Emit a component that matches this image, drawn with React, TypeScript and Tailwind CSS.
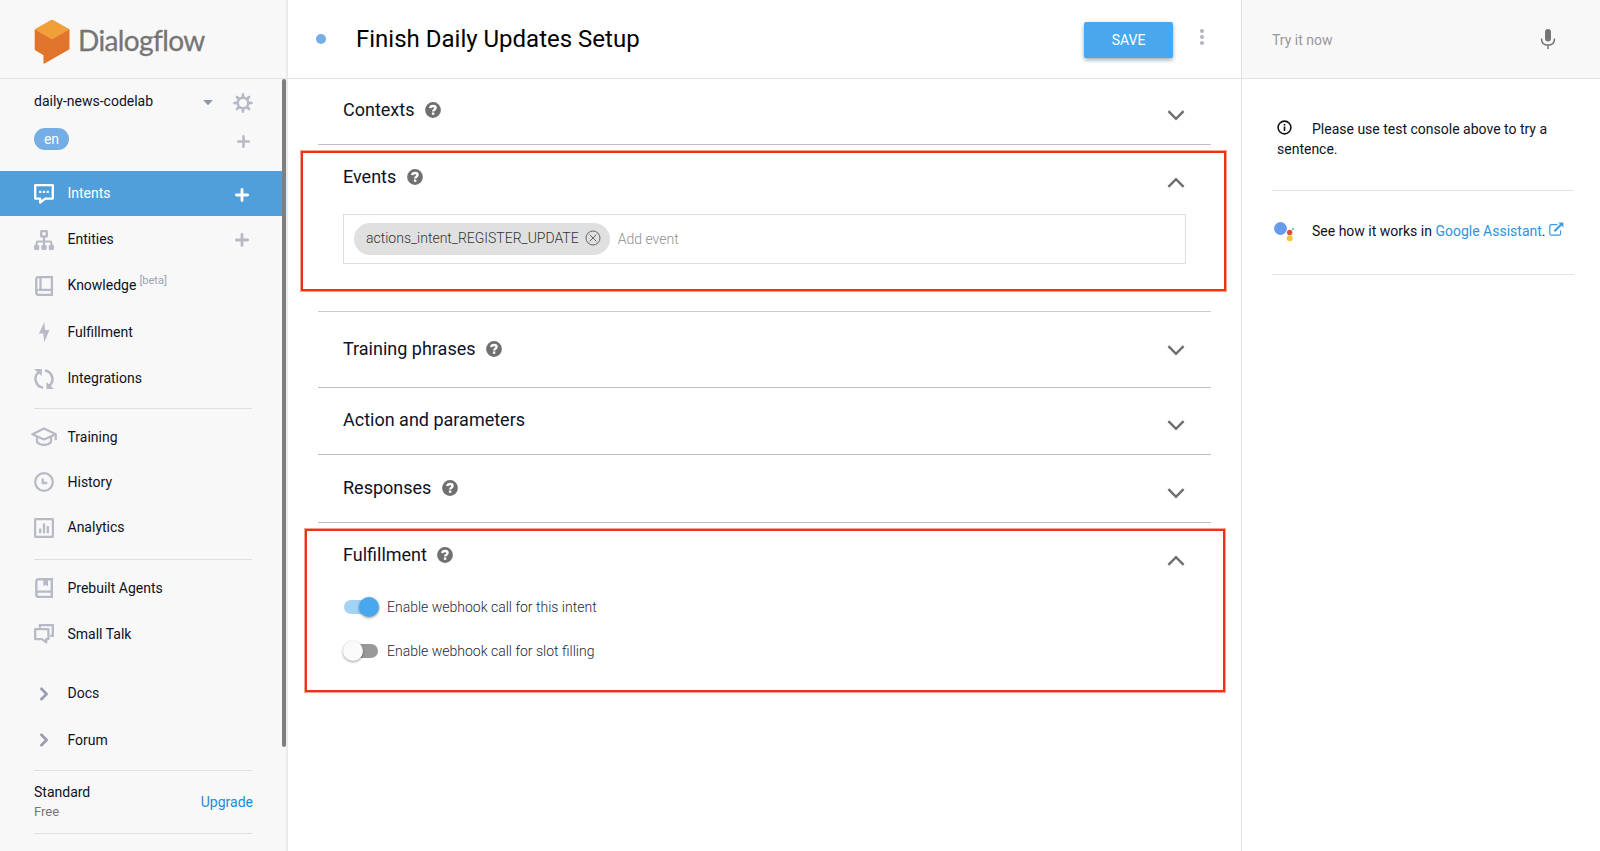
import type { ReactNode } from "react";
import clsx from "clsx";

const ICON = "#b7bac6";

function LogoMark() {
  return (
    <svg width="36" height="46" viewBox="0 0 36 46" className="shrink-0">
      <path d="M18 0.8 35.5 10.6V30.2L10.6 44.6Q9.6 45 9.5 43.8V36.2L1.2 31.2Q.7 30.8.7 30V10.6Z" fill="#e0742d" />
      <path d="M17 1.2Q18 .6 19.1 1.2L35.5 10.6 18 20.6.7 10.6Z" fill="#f19f38" />
    </svg>
  );
}

function Svg({ children, w = 20, h = 20, vb }: { children: ReactNode; w?: number; h?: number; vb?: string }) {
  return (
    <svg width={w} height={h} viewBox={vb ?? `0 0 ${w} ${h}`} fill="none" className="shrink-0">
      {children}
    </svg>
  );
}

const Gear = () => (
  <Svg>
    <circle cx="10" cy="10" r="5.2" stroke={ICON} strokeWidth="2.4" />
    {[0, 45, 90, 135, 180, 225, 270, 315].map((a) => (
      <path key={a} d="M8.9 .4Q10 -.2 11.1 .4L11.7 4.6H8.3Z" fill={ICON} transform={`rotate(${a} 10 10)`} />
    ))}
  </Svg>
);

const Plus = ({ color = ICON, size = 13 }: { color?: string; size?: number }) => (
  <Svg w={size} h={size} vb="0 0 14 14">
    <path d="M7 1.4V12.6M1.4 7H12.6" stroke={color} strokeWidth="2.8" strokeLinecap="round" />
  </Svg>
);

const IntentsIcon = () => (
  <Svg>
    <path d="M1.2 1.2H18.8V14.6H11.2L6.2 18.6V14.6H1.2Z" stroke="#fff" strokeWidth="2.3" strokeLinejoin="round" />
    <path d="M5.2 6.8H7.4V9H5.2ZM8.9 6.8H11.1V9H8.9ZM12.6 6.8H14.8V9H12.6Z" fill="#fff" />
  </Svg>
);

const EntitiesIcon = () => (
  <Svg>
    <rect x="7.2" y="1.1" width="5.6" height="5.4" rx=".6" stroke={ICON} strokeWidth="2.3" />
    <path d="M10 7V16M2.6 16V13Q2.6 11.6 4 11.6H16Q17.4 11.6 17.4 13V16" stroke={ICON} strokeWidth="2" />
    <rect x="0" y="15" width="5.2" height="5" rx="1.2" fill={ICON} />
    <rect x="7.4" y="15" width="5.2" height="5" rx="1.2" fill={ICON} />
    <rect x="14.8" y="15" width="5.2" height="5" rx="1.2" fill={ICON} />
  </Svg>
);

const KnowledgeIcon = () => (
  <Svg>
    <path d="M17.9 14.2V1.2H4.5Q2.2 1.2 2.2 3.4V16.6Q2.2 18.9 4.5 18.9H17.9V13.8H5M6.5 1V13.8M4.6 13.8Q2.2 13.8 2.2 16" stroke={ICON} strokeWidth="2.3" />
  </Svg>
);

const BoltIcon = () => (
  <Svg>
    <path d="M10.4 0 5 11.4H9.2L10.4 20 15.4 8H10.9Z" fill={ICON} />
  </Svg>
);

const IntegrationsIcon = () => (
  <Svg>
    <path d="M11 1.4A8.8 8.8 0 0 1 15 17M9 18.7A8.8 8.8 0 0 1 5 3" stroke={ICON} strokeWidth="2.5" />
    <path d="M0 0H7.8V7ZM20 20H12.4V13Z" fill={ICON} />
  </Svg>
);

const TrainingIcon = () => (
  <Svg w={26} h={20}>
    <path d="M1.4 7.2 13 1.6 24.8 7.2 13 12.6Z" stroke={ICON} strokeWidth="2.2" strokeLinejoin="round" />
    <path d="M6 9.6V15Q8.6 17.9 13 17.9T20 15V9.6M24.8 7V13.2" stroke={ICON} strokeWidth="2.2" />
  </Svg>
);

const HistoryIcon = () => (
  <Svg>
    <circle cx="10" cy="10" r="8.8" stroke={ICON} strokeWidth="2.3" />
    <path d="M8.7 6.4V11H13.2" stroke={ICON} strokeWidth="2.3" />
  </Svg>
);

const AnalyticsIcon = () => (
  <Svg>
    <rect x="1.1" y="1.1" width="17.8" height="17.8" rx=".4" stroke={ICON} strokeWidth="2.2" />
    <path d="M6.2 15.2V10.4M10 15.2V5.4M13.8 15.2V8" stroke={ICON} strokeWidth="2.3" />
  </Svg>
);

const PrebuiltIcon = () => (
  <Svg>
    <path d="M17.8 13.6V1.2H4.6Q2.3 1.2 2.3 3.6V16.6Q2.3 18.9 4.6 18.9H17.8V13.6H4.6Q2.3 13.6 2.3 16" stroke={ICON} strokeWidth="2.4" />
    <path d="M9.4 1.6H14V8.6L11.7 6.8 9.4 8.6Z" fill={ICON} />
  </Svg>
);

const SmallTalkIcon = () => (
  <Svg>
    <path d="M5.9 3.8V1.2H18.8V11.8H16.2" stroke={ICON} strokeWidth="2.3" />
    <path d="M1.2 5.2H14.4V15.2H12.2V18.4L8 15.2H1.2Z" stroke={ICON} strokeWidth="2.3" strokeLinejoin="round" />
  </Svg>
);

const RightIcon = () => (
  <Svg>
    <path d="M7.6 5 12.6 10 7.6 15" stroke="#9a9eb0" strokeWidth="2.8" strokeLinecap="square" strokeLinejoin="round" />
  </Svg>
);

function NavItem({ icon, label, className, extra }: { icon: ReactNode; label: string; className: string; extra?: ReactNode }) {
  return (
    <div className={clsx("flex shrink-0 items-center pr-[37px] pl-[30px] text-sm", className)}>
      <span className="flex w-7 justify-center">{icon}</span>
      <span className="-mt-px pl-[9.5px]">{label}</span>
      {extra}
    </div>
  );
}

const Rule = ({ className }: { className: string }) => (
  <div className={clsx("ml-[34px] h-px w-[218px] shrink-0 bg-[#dfdfe1]", className)} />
);

function Sidebar() {
  return (
    <aside className="flex w-[288px] shrink-0 flex-col border-r-2 border-[#ebebeb] bg-[#f8f8f8]">
      <div className="flex h-[79px] shrink-0 items-center border-b border-[#e2e2e2] pt-[6px] pl-[34px]">
        <LogoMark />
        <span className="-mt-[5px] pl-[8px] font-[Lato] text-[28px] leading-9 tracking-[-0.6px] text-[#757575] [-webkit-text-stroke:0.3px_#757575]">Dialogflow</span>
      </div>
      <div className="flex min-h-0 flex-1">
        <nav className="flex w-[282px] shrink-0 flex-col">
          <div className="mt-[13px] flex h-5 items-center pr-[29px] pl-[34px] text-sm">
            <span className="-mt-[3px] flex-1">daily-news-codelab</span>
            <svg width="10" height="5" viewBox="0 0 10 5" className="mr-5">
              <path d="M.2 0H9.8L5.8 4.6Q5 5.2 4.2 4.6Z" fill="#9095a9" />
            </svg>
            <span className="mt-px"><Gear /></span>
          </div>
          <div className="mt-[15px] mb-[21px] flex h-[23px] items-center justify-between pr-8 pl-[34px]">
            <span className="flex h-[22px] w-[35px] items-center justify-center rounded-full bg-[#74aee5] text-sm text-white">en</span>
            <span className="mt-1.5"><Plus /></span>
          </div>
          <NavItem className="h-[45px] bg-[#509fdb] text-white" icon={<IntentsIcon />} label="Intents" extra={<span className="-mr-1 ml-auto pt-0.5"><Plus color="#fff" size={14} /></span>} />
          <NavItem className="h-[47px]" icon={<EntitiesIcon />} label="Entities" extra={<span className="-mr-1 ml-auto"><Plus size={14} /></span>} />
          <NavItem className="h-[45px]" icon={<KnowledgeIcon />} label="Knowledge" extra={<span className="-mt-2.5 pl-[3px] text-[11px] text-[#9da1b3]">[beta]</span>} />
          <NavItem className="h-[48px]" icon={<BoltIcon />} label="Fulfillment" />
          <NavItem className="h-[45px]" icon={<IntegrationsIcon />} label="Integrations" />
          <Rule className="mt-[7px]" />
          <NavItem className="mt-[5px] h-[46px]" icon={<TrainingIcon />} label="Training" />
          <NavItem className="h-[44px]" icon={<HistoryIcon />} label="History" />
          <NavItem className="h-[47px]" icon={<AnalyticsIcon />} label="Analytics" />
          <Rule className="mt-2" />
          <NavItem className="mt-[5px] h-[46px]" icon={<PrebuiltIcon />} label="Prebuilt Agents" />
          <NavItem className="h-[46px]" icon={<SmallTalkIcon />} label="Small Talk" />
          <NavItem className="mt-[13px] h-[47px]" icon={<RightIcon />} label="Docs" />
          <NavItem className="h-[46px]" icon={<RightIcon />} label="Forum" />
          <Rule className="mt-[7px]" />
          <div className="flex h-[62px] shrink-0 items-center justify-between pr-[29px] pl-[34px]">
            <div>
              <p className="text-sm leading-5">Standard</p>
              <p className="text-[13px] leading-5 text-[#757575]">Free</p>
            </div>
            <a className="text-sm text-[#1f88dc]">Upgrade</a>
          </div>
          <Rule className="" />
        </nav>
        <div className="h-[668px] w-1 flex-1 rounded-full bg-[#7f7f7f]" />
      </div>
    </aside>
  );
}

const Help = () => (
  <svg width="16" height="16" viewBox="0 0 16 16" className="ml-[10.5px] shrink-0">
    <circle cx="8" cy="8" r="7.9" fill="#707070" />
    <path d="M5.2 6.2C5.4 4.6 6.5 4 8.1 4S10.6 4.9 10.6 6.1C10.6 7.8 8.1 7.7 8.1 9.6" fill="none" stroke="#fff" strokeWidth="2.3" />
    <path d="M6.9 10.5H9.3V12.8H6.9Z" fill="#fff" />
  </svg>
);

function Chevron({ up, className }: { up?: boolean; className: string }) {
  return (
    <svg width="18" height="12" viewBox="0 0 18 12" fill="none" className={clsx("ml-auto shrink-0", className)}>
      <path d={up ? "M1.4 9.8 9 2.2 16.6 9.8" : "M1.4 2.2 9 9.8 16.6 2.2"} stroke="#6f6f6f" strokeWidth="2.5" />
    </svg>
  );
}

interface SectionProps {
  title: string;
  help?: boolean;
  open?: boolean;
  className: string;
  chevron: string;
  children?: ReactNode;
}

function Section({ title, help, open, className, chevron, children }: SectionProps) {
  return (
    <section className={clsx("shrink-0 pr-[26px] pl-[25px]", className)}>
      <div className="flex h-6 items-center">
        <h2 className="text-lg leading-6">{title}</h2>
        {help && <Help />}
        <Chevron up={open} className={chevron} />
      </div>
      {children}
    </section>
  );
}

function Toggle({ on, label }: { on?: boolean; label: string }) {
  return (
    <div className="flex h-5 items-center pl-px">
      <span className={clsx("flex h-3.5 w-[34px] items-center rounded-full", on ? "justify-end bg-[#a4d3f6]" : "bg-[#999]")}>
        <span className={clsx("size-5 shrink-0 rounded-full shadow-[0_1px_3px_rgba(0,0,0,0.4)]", on ? "-mr-px bg-[#49a7ee]" : "-ml-px bg-[#fafafa]")} />
      </span>
      <span className="pl-[9px] text-sm font-light text-[#23273a]">{label}</span>
    </div>
  );
}

function Main() {
  return (
    <main className="relative flex min-w-0 flex-1 flex-col bg-white">
      <header className="flex h-[79px] shrink-0 items-center border-b border-[#e2e2e2] pl-7">
        <span className="size-2.5 rounded-full bg-[#74aee5]" />
        <h1 className="flex-1 pl-[30px] text-2xl text-black">Finish Daily Updates Setup</h1>
        <button className="mt-0.5 h-9 w-[89px] rounded-[2px] bg-[#49a7ee] text-sm text-white shadow-[0_2px_4px_rgba(0,0,0,0.35)]">SAVE</button>
        <svg width="4" height="16" viewBox="0 0 4 16" className="mr-[37px] mb-1 ml-[27px] overflow-visible" fill="#b4b7c1">
          <circle cx="2" cy="2" r="2.1" />
          <circle cx="2" cy="8" r="2.1" />
          <circle cx="2" cy="14" r="2.1" />
        </svg>
      </header>
      <div className="mr-[30px] ml-[30px] flex flex-col">
        <Section title="Contexts" help className="h-[66px] border-b border-[#c4bfc2] pt-[19px]" chevron="mt-[9px]" />
        <Section title="Events" help open className="h-[167px] border-b border-[#cfcbcd] pt-5" chevron="mt-[11px]">
          <div className="mt-[25px] -mr-px flex h-[50px] items-center border border-[#dedede] px-2.5 pb-px">
            <span className="flex h-8 items-center rounded-full bg-[#e0e0e0] pr-[9px] pb-0.5 pl-3 text-sm font-light text-[#333]">
              actions_intent_REGISTER_UPDATE
              <svg width="16" height="16" viewBox="0 0 16 16" className="ml-1.5" fill="none" stroke="#666">
                <circle cx="8" cy="8" r="7" />
                <path d="M4.6 4.6 11.4 11.4M11.4 4.6 4.6 11.4" />
              </svg>
            </span>
            <span className="pl-2 text-sm font-light text-[#8f8f8f]">Add event</span>
          </div>
        </Section>
        <Section title="Training phrases" help className="h-[76px] border-b border-[#c4c0c2] pt-[25px]" chevron="mt-0.5" />
        <Section title="Action and parameters" className="h-[67px] border-b border-[#c4bbc0] pt-5" chevron="mt-[9px]" />
        <Section title="Responses" help className="h-[68px] border-b border-[#c4bfc3] pt-[21px]" chevron="mt-[9px]" />
        <Section title="Fulfillment" help open className="h-[170px] pt-5" chevron="mt-[11px]">
          <div className="mt-[30px] flex flex-col gap-6">
            <Toggle on label="Enable webhook call for this intent" />
            <Toggle label="Enable webhook call for slot filling" />
          </div>
        </Section>
      </div>
      <div className="pointer-events-none absolute top-[151px] left-[13px] h-[140px] w-[925px] border-2 border-[#ee3312] shadow-[0_0_0_1px_rgba(238,51,18,0.45)]" />
      <div className="pointer-events-none absolute top-[529px] left-[17px] h-[163px] w-[920px] border-2 border-[#ee3312] shadow-[0_0_0_1px_rgba(238,51,18,0.45)]" />
    </main>
  );
}

function TestPanel() {
  return (
    <aside className="flex w-[359px] shrink-0 flex-col border-l border-[#e0e0e0] bg-white">
      <div className="flex h-[79px] shrink-0 items-center justify-between border-b border-[#e2e2e2] bg-[#f8f8f8] pr-11 pl-[30px]">
        <span className="pt-0.5 text-sm text-[#999]">Try it now</span>
        <svg width="16" height="20" viewBox="0 0 16 20" fill="none">
          <rect x="5" y="0" width="6" height="12.6" rx="3" fill="#757575" />
          <path d="M1.5 9.4Q1.5 16 8 16T14.5 9.4M8 16V20" stroke="#757575" strokeWidth="1.5" />
        </svg>
      </div>
      <div className="mr-[26px] ml-[30px] flex flex-col">
        <p className="h-[112px] border-b border-[#e3e3e3] pt-10 pl-[5px] text-sm leading-5">
          <svg width="15" height="15" viewBox="0 0 15 15" className="-mt-[5px] mr-[20px] inline" fill="none" stroke="#111">
            <circle cx="7.5" cy="7.5" r="6.4" strokeWidth="1.6" />
            <path d="M7.5 6.6V11M7.5 4.1V5.5" strokeWidth="1.6" />
          </svg>
          Please use test console above to try a sentence.
        </p>
        <div className="flex h-[84px] items-center border-b border-[#e3e3e3] pb-1 text-sm whitespace-pre">
          <svg width="22" height="22" viewBox="0 0 22 22" className="mt-0.5 mr-[17px] ml-px">
            <circle cx="7.5" cy="7.5" r="6.4" fill="#669ceb" />
            <circle cx="16.7" cy="11.4" r="2.7" fill="#dc4c40" />
            <circle cx="16.7" cy="17.3" r="3" fill="#eec63c" />
            <circle cx="20" cy="8" r="1.1" fill="#4fc07c" />
          </svg>
          <span>See how it works in <a className="text-[#2b94e0]">Google Assistant</a>.</span>
          <svg width="15" height="15" viewBox="0 0 15 15" className="mb-0.5 ml-[3px]" fill="none" stroke="#3a9be2" strokeWidth="1.2">
            <path d="M8.4 2.6H2.4Q.8 2.6.8 4.2V11.6Q.8 13.2 2.4 13.2H10Q11.6 13.2 11.6 11.6V8.4" />
            <path d="M5.4 9.2 12.4 2.2" strokeWidth="2" />
            <path d="M9.4.4H14.4V5.4Z" fill="#3a9be2" stroke="none" />
          </svg>
        </div>
      </div>
    </aside>
  );
}

export default function App() {
  return (
    <div className="flex h-[851px] w-[1600px] overflow-hidden font-[Roboto,sans-serif] text-[#0d1226]">
      <Sidebar />
      <Main />
      <TestPanel />
    </div>
  );
}
